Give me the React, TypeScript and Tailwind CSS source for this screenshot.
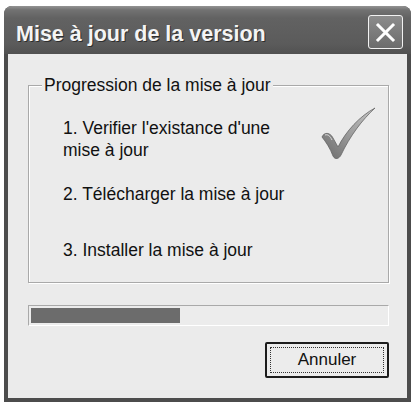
import React from 'react';

const steps = [
  { id: 1, label: ["1. Verifier l'existance d'une", 'mise à jour'] },
  { id: 2, label: ['2. Télécharger la mise à jour'] },
  { id: 3, label: ['3. Installer la mise à jour'] },
];

const CheckMark: React.FC = () => (
  <svg width="56" height="54" viewBox="0 0 56 54">
    <defs>
      <linearGradient id="chk" x1="0" y1="1" x2="1" y2="0">
        <stop offset="0" stopColor="#6a6a6a" />
        <stop offset="0.45" stopColor="#979797" />
        <stop offset="1" stopColor="#c6c6c6" />
      </linearGradient>
    </defs>
    <path
      d="M2 30 C4 25 10 25 13 31 L18 40 C26 24 40 9 55 1 C42 13 30 29 21 48 C19 52 15 53 13 49 C10 41 6 35 2 30 Z"
      fill="url(#chk)"
      stroke="#666666"
      strokeWidth="0.8"
    />
    <path d="M5 28 C8 27 10 29 12 33" stroke="#d8d8d8" strokeWidth="1" fill="none" />
  </svg>
);

const CloseButton: React.FC = () => (
  <button className="w-[35px] h-[34px] mt-[9px] rounded-[3px] border border-[#f2f2f2] bg-[linear-gradient(to_bottom,#8c8c8c,#6c6c6c)] flex items-center justify-center">
    <svg width="21" height="21" viewBox="0 0 21 21">
      <path d="M3 3 L18 18 M18 3 L3 18" stroke="#ffffff" strokeWidth="3" strokeLinecap="square" />
    </svg>
  </button>
);

const App: React.FC = () => {
  const progress = 42;

  return (
    <div className="w-[415px] h-[404px] bg-white pt-[6px] pl-[4px] font-['Liberation_Sans',Arial,sans-serif]">
      <div className="w-[407px] h-[396px] rounded-t-[8px] overflow-hidden flex flex-col bg-[#4c4c4c]">
        {/* Title bar */}
        <div className="h-[48px] shrink-0 flex items-start justify-between pl-[12px] pr-[8px] bg-[linear-gradient(to_bottom,#949494_0px,#727272_4px,#626262_12px,#5b5b5b_38px,#515151_48px)]">
          <span className="mt-[16px] text-[21.5px] leading-[24px] font-bold text-[#f4f4f4] [text-shadow:1px_1px_0_#2e2e2e]">
            Mise à jour de la version
          </span>
          <CloseButton />
        </div>

        {/* Client area */}
        <div className="flex-1 flex px-[4px] pb-[4px]">
          <div className="flex-1 flex flex-col bg-[#ebebeb] pl-[20px] pr-[18px] pb-[20px] text-[#111] text-[17.5px] leading-[22px]">
            <fieldset className="mt-[21px] border border-[#a9a9a9] shadow-[inset_1px_1px_0_#ffffff,1px_1px_0_#ffffff]">
              <legend className="ml-[13px] px-[2px] bg-[#ebebeb] leading-[20px]">
                Progression de la mise à jour
              </legend>
              <div className="flex items-start justify-between pl-[34px] pr-[10px] pt-[22px] pb-[21px]">
                <div className="flex flex-col">
                  {steps.map((s, i) => (
                    <div key={s.id} className={i === 0 ? '' : i === 1 ? 'mt-[22px]' : 'mt-[34px]'}>
                      {s.label.map((line) => (
                        <div key={line}>{line}</div>
                      ))}
                    </div>
                  ))}
                </div>
                <div className="mt-[-10px] mr-[2px]">
                  <CheckMark />
                </div>
              </div>
            </fieldset>

            {/* Progress bar */}
            <div className="mt-[22px] h-[21px] border border-[#a9a9a9] border-r-white border-b-white p-[2px] bg-[#ececec]">
              <div className="h-full bg-[#6c6c6c]" style={{ width: `${progress}%` }} />
            </div>

            <button className="self-end mt-[16px] w-[124px] h-[36px] border-2 border-[#1c1c1c] rounded-[2px] bg-[#ececec] p-[3px]">
              <span className="flex h-full items-center justify-center border border-dotted border-[#333] text-[17px] leading-[20px]">
                Annuler
              </span>
            </button>
          </div>
        </div>
      </div>
    </div>
  );
};

export default App;
